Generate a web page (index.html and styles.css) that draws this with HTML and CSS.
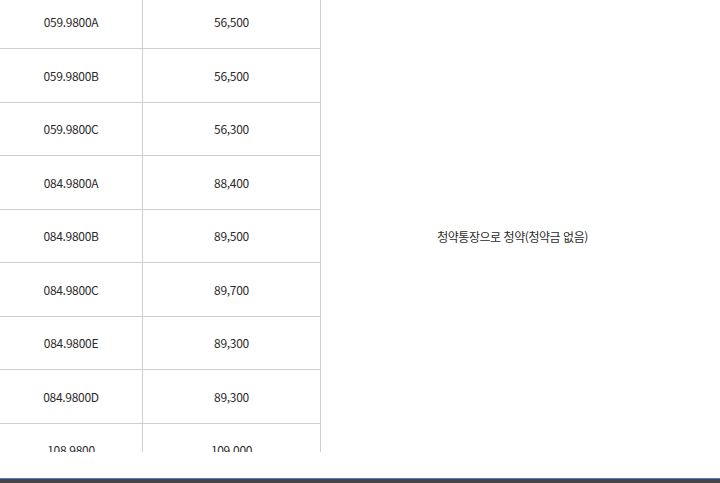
FILE: index.html
```html
<!DOCTYPE html>
<html lang="ko">
<head>
<meta charset="utf-8">
<title>청약 정보</title>
<link rel="stylesheet" href="styles.css">
</head>
<body>
<div class="table-wrap">
  <table class="price-table">
    <colgroup>
      <col class="col-type">
      <col class="col-price">
      <col class="col-note">
    </colgroup>
    <tbody>
      <tr><td>059.9800A</td><td>56,500</td><td class="note" rowspan="9">청약통장으로 청약(청약금 없음)</td></tr>
      <tr><td>059.9800B</td><td>56,500</td></tr>
      <tr><td>059.9800C</td><td>56,300</td></tr>
      <tr><td>084.9800A</td><td>88,400</td></tr>
      <tr><td>084.9800B</td><td>89,500</td></tr>
      <tr><td>084.9800C</td><td>89,700</td></tr>
      <tr><td>084.9800E</td><td>89,300</td></tr>
      <tr><td>084.9800D</td><td>89,300</td></tr>
      <tr><td>108.9800</td><td>109,000</td></tr>
    </tbody>
  </table>
</div>
<div class="footer-bar"></div>
</body>
</html>
```

FILE: styles.css
```css
html, body {
  margin: 0;
  padding: 0;
  height: 483px;
  overflow: hidden;
  background: #fff;
}

body {
  font-family: "Noto Sans CJK KR", "Open Sans", sans-serif;
  font-size: 12px;
  color: #2b2b2b;
}

.table-wrap {
  height: 452px;
  overflow: hidden;
}

.price-table {
  margin-top: -4.5px;
  border-collapse: separate;
  border-spacing: 0;
  width: 704px;
  table-layout: fixed;
}

.col-type { width: 143px; }
.col-price { width: 178px; }
.col-note { width: 383px; }

.price-table td {
  height: 52.5px;
  padding: 0;
  text-align: center;
  vertical-align: middle;
  border-bottom: 1px solid #cfcfcf;
  border-right: 1px solid #cfcfcf;
  letter-spacing: -0.3px;
}

.price-table td.note {
  border-right: none;
  border-bottom: none;
  letter-spacing: -0.45px;
}

.footer-bar {
  margin-top: 26px;
  height: 4px;
  border-top: 1px solid #4d7fcf;
  background: #454545;
}
```
